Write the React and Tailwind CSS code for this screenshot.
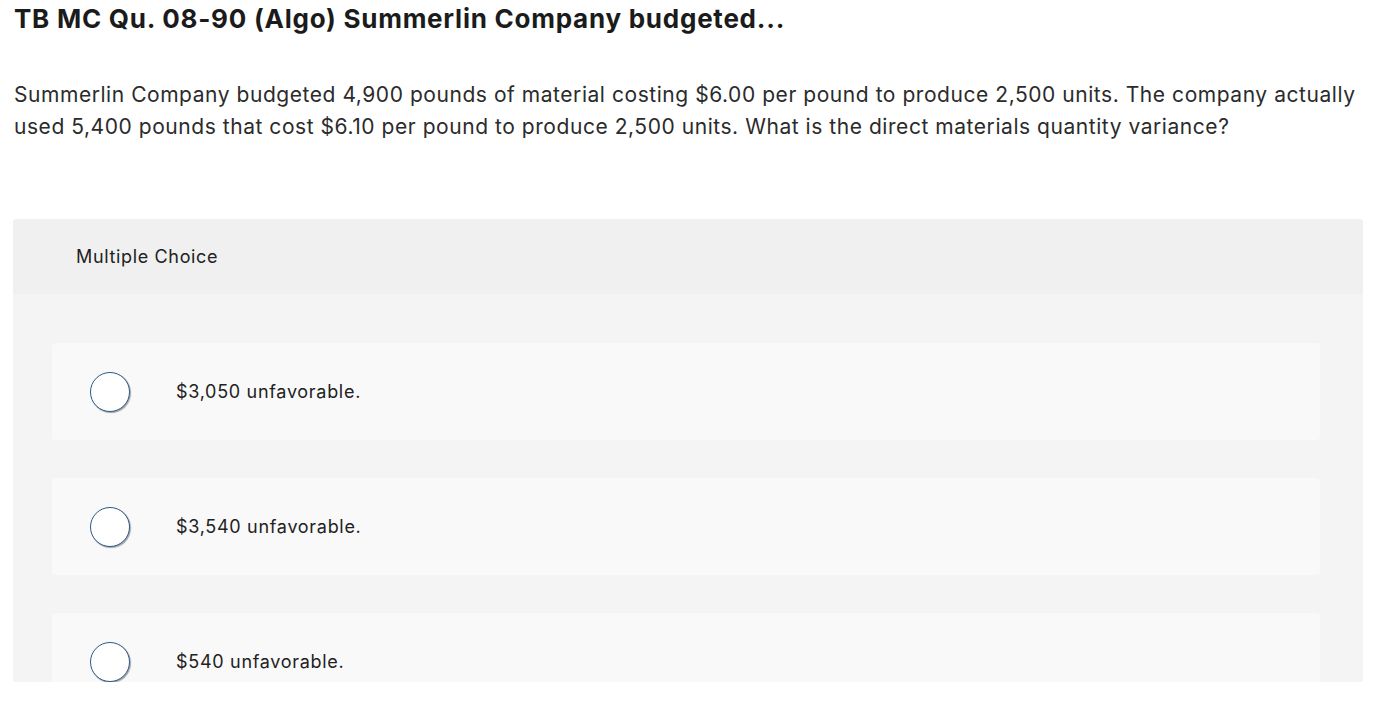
const choices = [
  "$3,050 unfavorable.",
  "$3,540 unfavorable.",
  "$540 unfavorable.",
];

export default function App() {
  return (
    <div className="min-h-[711px] bg-white text-[#222] [font-family:Inter,'Open_Sans',sans-serif]">
      <div className="pl-[14px] pr-[6px]">
        <h1 className="pt-[3px] text-[26px] font-bold leading-[32px] tracking-[0.75px] text-[#1b1b1b]">
          TB MC Qu. 08-90 (Algo) Summerlin Company budgeted...
        </h1>
        <p className="mt-[44px] text-[21px] leading-[32px] tracking-[0.55px] text-[#2b2b2b]">
          Summerlin Company budgeted 4,900 pounds of material costing $6.00 per pound to produce 2,500 units. The company actually used 5,400 pounds that cost $6.10 per pound to produce 2,500 units. What is the direct materials quantity variance?
        </p>
      </div>
      <div className="ml-[13px] mr-[12px] mt-[76px] h-[463px] overflow-hidden rounded-t-[4px] bg-[#f4f4f4]">
        <div className="flex h-[75px] items-center bg-[#f0f0f0] pl-[63px] text-[18px] tracking-[0.65px] text-[#222]">
          Multiple Choice
        </div>
        <div className="flex flex-col gap-[38px] pl-[39px] pr-[43px] pt-[49px]">
          {choices.map((c) => (
            <div key={c} className="flex h-[97px] shrink-0 items-center rounded-[4px] bg-[#f9f9f9]">
              <span className="ml-[38px] h-[40px] w-[40px] shrink-0 rounded-full border-[1.5px] border-[#2c5a8a] bg-white shadow-[1px_1px_1px_rgba(0,0,0,0.35)]" />
              <span className="ml-[46px] text-[18px] tracking-[0.7px] text-[#222]">{c}</span>
            </div>
          ))}
        </div>
      </div>
    </div>
  );
}
